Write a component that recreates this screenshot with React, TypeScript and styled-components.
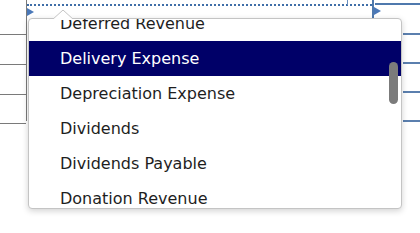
import React from 'react';
import styled, { createGlobalStyle } from 'styled-components';

const GlobalStyle = createGlobalStyle`
  html, body {
    margin: 0;
    padding: 0;
    background: #ffffff;
  }
  body {
    font-family: "DejaVu Sans", Verdana, sans-serif;
  }
`;

const Page = styled.div`
  position: relative;
  width: 420px;
  height: 233px;
  overflow: hidden;
  background: #ffffff;
`;

const Sheet = styled.div`
  display: grid;
  grid-template-columns: 27px 345px 1fr;
  align-items: start;
`;

const LeftColumn = styled.div`
  position: relative;
  height: 121px;
  border-right: 1px solid #7a7a7a;
  padding-top: 10px;
  box-sizing: border-box;
`;

const GrayRow = styled.div<{ $h: number }>`
  height: ${({ $h }) => $h}px;
  border-bottom: 1px solid #7a7a7a;
`;

const MiddleColumn = styled.div`
  position: relative;
  height: 6px;
  border-bottom: 2px dotted #3f6ea8;
  box-sizing: border-box;
`;

const CellDivider = styled.div`
  position: absolute;
  left: 320px;
  top: 0;
  width: 1px;
  height: 5px;
  background: #6a8fbf;
`;

const RightColumn = styled.div`
  position: relative;
  height: 121px;
  border-left: 2px solid #4f79ad;
  padding-top: 3px;
  box-sizing: border-box;
`;

const BlueTop = styled.div`
  height: 2px;
  background: #4f79ad;
  margin-left: 1px;
`;

const BlueRows = styled.div`
  margin-left: 29px;
  padding-top: 28px;
  display: flex;
  flex-direction: column;
  gap: 27px;
`;

const BlueLine = styled.div`
  height: 2px;
  background: #5b7fae;
`;

const Marker = styled.svg<{ $left: number; $top: number }>`
  position: absolute;
  left: ${({ $left }) => $left}px;
  top: ${({ $top }) => $top}px;
`;

const Popup = styled.div`
  position: absolute;
  left: 28px;
  top: 18px;
  width: 374px;
  height: 191px;
  box-sizing: border-box;
  border: 1px solid #c4c4c4;
  border-radius: 4px;
  background: #ffffff;
  box-shadow: 0 2px 6px rgba(0, 0, 0, 0.18);
`;

const Notch = styled.svg`
  position: absolute;
  left: 23px;
  top: -10px;
`;

const ListViewport = styled.div`
  height: 100%;
  overflow: hidden;
  border-radius: 4px;
`;

const List = styled.ul`
  list-style: none;
  margin: -13px 0 0 0;
  padding: 0;
`;

const Item = styled.li<{ $active?: boolean }>`
  height: 35px;
  display: flex;
  align-items: center;
  padding-left: 31px;
  font-size: 16px;
  color: ${({ $active }) => ($active ? '#ffffff' : '#1e1e1e')};
  background: ${({ $active }) => ($active ? '#000068' : 'transparent')};
  white-space: nowrap;
`;

const Thumb = styled.div`
  position: absolute;
  left: 360px;
  top: 43px;
  width: 9px;
  height: 42px;
  border-radius: 5px;
  background: #7b7b7b;
`;

const accounts = [
  'Deferred Revenue',
  'Delivery Expense',
  'Depreciation Expense',
  'Dividends',
  'Dividends Payable',
  'Donation Revenue',
];

export default function App() {
  const selected = 'Delivery Expense';
  return (
    <>
      <GlobalStyle />
      <Page>
        <Sheet>
          <LeftColumn>
            <GrayRow $h={24} />
            <GrayRow $h={29} />
            <GrayRow $h={29} />
            <GrayRow $h={28} />
          </LeftColumn>
          <MiddleColumn>
            <CellDivider />
          </MiddleColumn>
          <RightColumn>
            <BlueTop />
            <BlueRows>
              <BlueLine />
              <BlueLine />
              <BlueLine />
              <BlueLine />
            </BlueRows>
          </RightColumn>
        </Sheet>

        <Marker $left={27} $top={8} width="8" height="8" viewBox="0 0 8 8">
          <polygon points="0,0 7,4 0,8" fill="#4a78b8" />
        </Marker>
        <Marker $left={374} $top={7} width="8" height="8" viewBox="0 0 8 8">
          <polygon points="0,0 7,4 0,8" fill="#4a78b8" />
        </Marker>

        <Popup>
          <Notch width="22" height="11" viewBox="0 0 22 11">
            <polygon points="0,11 11,1 22,11" fill="#ffffff" stroke="#c4c4c4" strokeWidth="1" />
            <rect x="0" y="10" width="22" height="1.5" fill="#ffffff" />
          </Notch>
          <ListViewport>
            <List>
              {accounts.map(name => (
                <Item key={name} $active={name === selected}>
                  {name}
                </Item>
              ))}
            </List>
          </ListViewport>
          <Thumb />
        </Popup>
      </Page>
    </>
  );
}
